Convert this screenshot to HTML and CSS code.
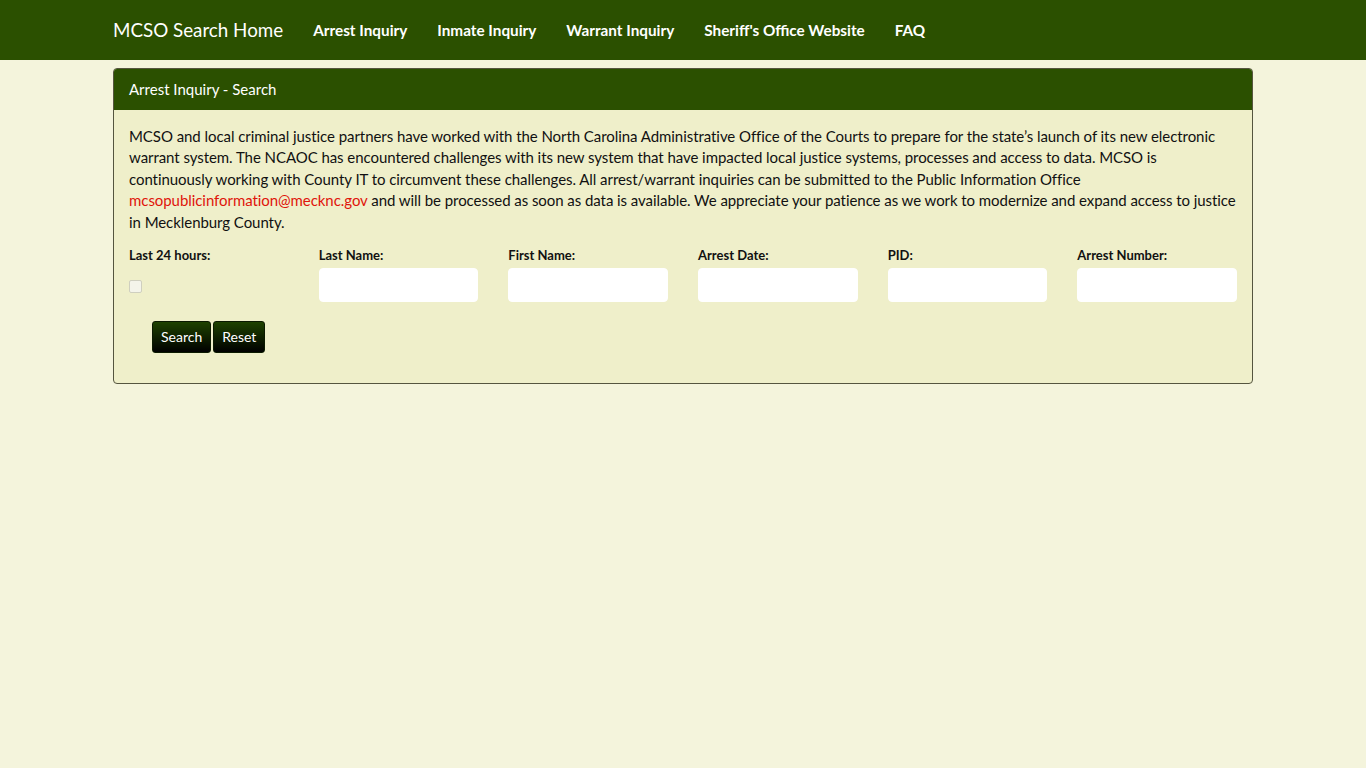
FILE: index.html
```html
<!DOCTYPE html>
<html lang="en">
<head>
    <meta charset="UTF-8" />
    <meta name="viewport" content="width=device-width, initial-scale=1.0"/>
    <title>MCSO Arrest Inquiry</title>
    <link rel="stylesheet" href="styles.css">
</head>
<body>

    <!-- Top navigation -->
    <nav class="navbar">
        <div class="container nav-inner">
            <a class="brand" href="#">MCSO Search Home</a>
            <ul class="nav-links">
                <li><a href="#">Arrest Inquiry</a></li>
                <li><a href="#">Inmate Inquiry</a></li>
                <li><a href="#">Warrant Inquiry</a></li>
                <li><a href="#">Sheriff's Office Website</a></li>
                <li><a href="#">FAQ</a></li>
            </ul>
        </div>
    </nav>

    <div class="container">
        <div class="panel">
            <div class="panel-heading">Arrest Inquiry - Search</div>
            <div class="panel-body">
                <p class="notice">MCSO and local criminal justice partners have worked with the North Carolina Administrative Office of the Courts to prepare for the state’s launch of its new electronic warrant system. The NCAOC has encountered challenges with its new system that have impacted local justice systems, processes and access to data. MCSO is continuously working with County IT to circumvent these challenges. All arrest/warrant inquiries can be submitted to the Public Information Office <a href="#" class="mail">mcsopublicinformation@mecknc.gov</a> and will be processed as soon as data is available. We appreciate your patience as we work to modernize and expand access to justice in Mecklenburg County.</p>

                <form class="search-form">
                    <div class="fields">
                        <div class="field">
                            <label for="last24">Last 24 hours:</label>
                            <input type="checkbox" id="last24" class="check">
                        </div>
                        <div class="field">
                            <label for="lastName">Last Name:</label>
                            <input type="text" id="lastName">
                        </div>
                        <div class="field">
                            <label for="firstName">First Name:</label>
                            <input type="text" id="firstName">
                        </div>
                        <div class="field">
                            <label for="arrestDate">Arrest Date:</label>
                            <input type="text" id="arrestDate">
                        </div>
                        <div class="field">
                            <label for="pid">PID:</label>
                            <input type="text" id="pid">
                        </div>
                        <div class="field">
                            <label for="arrestNumber">Arrest Number:</label>
                            <input type="text" id="arrestNumber">
                        </div>
                    </div>
                    <div class="actions">
                        <button type="button" class="btn">Search</button>
                        <button type="reset" class="btn">Reset</button>
                    </div>
                </form>
            </div>
        </div>
    </div>

</body>
</html>
```

FILE: styles.css
```css
body {
    margin: 0;
    padding: 0;
    background: #f4f4dc;
    font-family: Lato, "Open Sans", sans-serif;
    font-size: 15px;
    line-height: 1.42857;
    color: #111;
}

.container {
    width: 1140px;
    margin: 0 auto;
}

/* Navbar */
.navbar {
    background: #2b5000;
    height: 60px;
    margin-bottom: 8px;
}

.nav-inner {
    display: flex;
    align-items: center;
    height: 60px;
}

.brand {
    color: #fff;
    font-size: 18.8px;
    text-decoration: none;
    padding-right: 15px;
}

.nav-links {
    list-style: none;
    display: flex;
    margin: 0;
    padding: 0;
}

.nav-links a {
    display: block;
    padding: 0 15px;
    color: #fff;
    font-size: 15.3px;
    font-weight: bold;
    text-decoration: none;
    line-height: 60px;
}

/* Panel */
.panel {
    border: 1px solid #55553f;
    border-radius: 4px;
    overflow: hidden;
    background: #efefca;
}

.panel-heading {
    background: #2b5000;
    color: #fff;
    height: 41px;
    line-height: 41px;
    padding: 0 15px;
}

.panel-body {
    padding: 16px 15px 30px;
}

.notice {
    margin: 0 0 13px;
    letter-spacing: -0.06px;
}

.mail {
    color: #e0150b;
    text-decoration: none;
}

/* Search form */
.fields {
    display: grid;
    grid-template-columns: repeat(6, 1fr);
    column-gap: 30px;
}

.field label {
    display: block;
    font-size: 13px;
    font-weight: bold;
    margin-bottom: 3px;
}

.field input[type="text"] {
    display: block;
    width: 100%;
    height: 34px;
    box-sizing: border-box;
    border: 1px solid #fff;
    border-radius: 4px;
    background: #fff;
    padding: 6px 12px;
    font: inherit;
}

/* greyed-out checkbox */
.field .check {
    appearance: none;
    display: block;
    margin: 15px 0 0;
    width: 13px;
    height: 13px;
    border: 1px solid #cfcfbf;
    border-radius: 2px;
    background: #f4f4ea;
}

.actions {
    padding: 19px 0 0 23px;
    display: flex;
    gap: 2px;
}

.btn {
    height: 32px;
    padding: 0 8px;
    border: 1px solid #0b1a00;
    border-radius: 3px;
    background: linear-gradient(to bottom, #1e4200, #000);
    color: #fff;
    font-family: Lato, sans-serif;
    font-size: 14px;
    cursor: pointer;
}
```
